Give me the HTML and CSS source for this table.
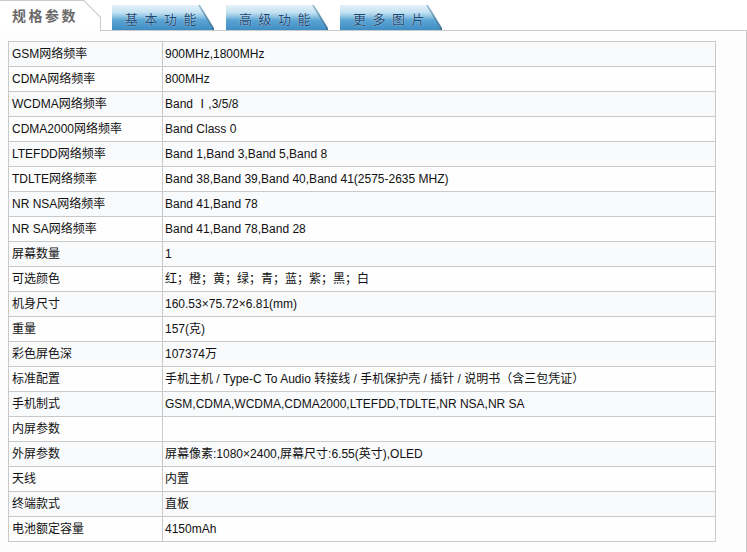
FILE: index.html
```html
<!DOCTYPE html>
<html lang="zh-CN">
<head>
<meta charset="utf-8">
<title>规格参数</title>
<link rel="stylesheet" href="styles.css">
</head>
<body>
<div class="tabs">
  <div class="tab-active"><div class="tab-active-inner"><span class="tab-active-label">规格参数</span></div></div>
  <div class="tab-blue"><div class="tab-blue-inner"><span class="tab-blue-label">基本功能</span></div></div>
  <div class="tab-blue"><div class="tab-blue-inner"><span class="tab-blue-label">高级功能</span></div></div>
  <div class="tab-blue"><div class="tab-blue-inner"><span class="tab-blue-label">更多图片</span></div></div>
</div>
<div class="panel">
  <table class="spec">
    <tr><td class="k">GSM网络频率</td><td>900MHz,1800MHz</td></tr>
    <tr><td class="k">CDMA网络频率</td><td>800MHz</td></tr>
    <tr><td class="k">WCDMA网络频率</td><td>Band Ⅰ,3/5/8</td></tr>
    <tr><td class="k">CDMA2000网络频率</td><td>Band Class 0</td></tr>
    <tr><td class="k">LTEFDD网络频率</td><td>Band 1,Band 3,Band 5,Band 8</td></tr>
    <tr><td class="k">TDLTE网络频率</td><td>Band 38,Band 39,Band 40,Band 41(2575-2635 MHZ)</td></tr>
    <tr><td class="k">NR NSA网络频率</td><td>Band 41,Band 78</td></tr>
    <tr><td class="k">NR SA网络频率</td><td>Band 41,Band 78,Band 28</td></tr>
    <tr><td class="k">屏幕数量</td><td>1</td></tr>
    <tr><td class="k">可选颜色</td><td>红；橙；黄；绿；青；蓝；紫；黑；白</td></tr>
    <tr><td class="k">机身尺寸</td><td>160.53×75.72×6.81(mm)</td></tr>
    <tr><td class="k">重量</td><td>157(克)</td></tr>
    <tr><td class="k">彩色屏色深</td><td>107374万</td></tr>
    <tr><td class="k">标准配置</td><td>手机主机 / Type-C To Audio 转接线 / 手机保护壳 / 插针 / 说明书（含三包凭证）</td></tr>
    <tr><td class="k">手机制式</td><td>GSM,CDMA,WCDMA,CDMA2000,LTEFDD,TDLTE,NR NSA,NR SA</td></tr>
    <tr><td class="k">内屏参数</td><td></td></tr>
    <tr><td class="k">外屏参数</td><td>屏幕像素:1080×2400,屏幕尺寸:6.55(英寸),OLED</td></tr>
    <tr><td class="k">天线</td><td>内置</td></tr>
    <tr><td class="k">终端款式</td><td>直板</td></tr>
    <tr><td class="k">电池额定容量</td><td>4150mAh</td></tr>
  </table>
</div>
</body>
</html>
```
FILE: styles.css
```css
html, body {
  margin: 0;
  padding: 0;
  background: #fff;
}
body {
  font-family: "Liberation Sans", "Noto Sans CJK SC", Arial, sans-serif;
  font-size: 12px;
  color: #111;
  width: 747px;
  overflow: hidden;
}
.tabs {
  display: flex;
  align-items: flex-end;
  height: 30px;
}
.tab-active {
  position: relative;
  z-index: 1;
  width: 101px;
  height: 31px;
  margin-bottom: -1px;
  padding: 1px 1px 0 0;
  box-sizing: border-box;
  background: #c9c9c9;
  clip-path: polygon(0 0, 84px 0, 101px 17px, 101px 100%, 0 100%);
}
.tab-active-inner {
  height: 100%;
  background: #fff;
  clip-path: polygon(0 0, 83.5px 0, 100px 16.5px, 100px 100%, 0 100%);
  display: flex;
  align-items: center;
  padding-left: 12px;
  padding-bottom: 2px;
  box-sizing: border-box;
}
.tab-active-label {
  font-family: "Noto Sans CJK SC", sans-serif;
  font-size: 14px;
  font-weight: bold;
  letter-spacing: 2.5px;
  color: #6a6a6a;
}
.tab-blue {
  width: 102px;
  height: 25px;
  margin-left: 11px;
  box-sizing: border-box;
  border-radius: 3px 0 0 0;
  background: linear-gradient(to bottom, #9fc3d6 0%, #5f8fab 50%, #3f7398 100%);
  clip-path: polygon(0 0, 88px 0, 102px 23px, 102px 100%, 0 100%);
  padding-right: 2px;
}
.tab-blue + .tab-blue {
  margin-left: 12px;
}
.tab-blue-inner {
  height: 100%;
  box-sizing: border-box;
  border-radius: 3px 0 0 0;
  background: linear-gradient(to bottom, #e6f2f8 0%, #c3e1f1 30%, #8cc3e3 47%, #5ca6d5 60%, #3f8dc4 100%);
  clip-path: polygon(0 0, 86px 0, 100px 23px, 100px 100%, 0 100%);
  display: flex;
  align-items: center;
  padding-left: 13px;
  padding-top: 1px;
}
.tab-blue-label {
  font-family: "Noto Sans CJK SC", sans-serif;
  font-size: 13px;
  letter-spacing: 6.5px;
  color: #1b4872;
  text-shadow: 0 0 1px #eaf5fb;
}
.panel {
  border-top: 1px solid #c9c9c9;
  border-right: 1px solid #c9c9c9;
  background: #fdfdfe;
  padding: 10px 0 20px 8px;
  box-sizing: border-box;
  width: 747px;
}
.spec {
  border-collapse: collapse;
  width: 708px;
  table-layout: fixed;
}
.spec tr {
  height: 25px;
}
.spec td {
  border: 1px solid #c9c9c9;
  height: 25px;
  padding: 0 0 0 2px;
  box-sizing: border-box;
  line-height: 14px;
  white-space: nowrap;
  vertical-align: middle;
}
.spec td.k {
  width: 154px;
  padding-left: 3px;
}
.spec tr:nth-child(odd) td {
  background: #f9fafc;
}
.spec tr:nth-child(even) td {
  background: #fefefe;
}
```
